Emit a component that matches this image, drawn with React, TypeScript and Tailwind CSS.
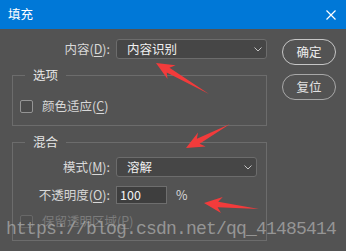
import React from "react";

type P = [number, number];

function arrowPoints(tip: P, tail: P, head = 17, hw = 8, sw = 2.6) {
  const dx = tail[0] - tip[0];
  const dy = tail[1] - tip[1];
  const L = Math.hypot(dx, dy);
  const ux = dx / L, uy = dy / L;
  const px = -uy, py = ux;
  const bx = tip[0] + ux * head, by = tip[1] + uy * head;
  const nx = tip[0] + ux * (head - 4), ny = tip[1] + uy * (head - 4);
  const pts: P[] = [
    tip,
    [bx + px * hw, by + py * hw],
    [nx + px * sw, ny + py * sw],
    tail,
    [nx - px * sw, ny - py * sw],
    [bx - px * hw, by - py * hw],
  ];
  return pts.map((p) => `${p[0].toFixed(1)},${p[1].toFixed(1)}`).join(" ");
}

function Chevron() {
  return (
    <svg width="8" height="5" viewBox="0 0 8 5" className="shrink-0">
      <path d="M0.5 0.5 L4 4 L7.5 0.5" fill="none" stroke="#c4c4c4" strokeWidth="1" />
    </svg>
  );
}

function Label({ text, mn, rest = "):" }: { text: string; mn: string; rest?: string }) {
  return (
    <span className="text-[#d8d8d8]">
      {text}(<span className="underline underline-offset-2">{mn}</span>{rest}
    </span>
  );
}

function Checkbox({ disabled = false }: { disabled?: boolean }) {
  return (
    <div
      className={
        disabled
          ? "w-[13px] h-[13px] rounded-[2px] border border-[#686868] bg-[#4f4f4f]"
          : "w-[13px] h-[13px] rounded-[2px] border border-[#959595] bg-[#4b4b4b]"
      }
    />
  );
}

export default function App() {
  return (
    <div className="relative w-[346px] h-[251px] flex flex-col bg-[#535353] font-['Noto_Sans_CJK_SC',sans-serif] text-[12.5px] overflow-hidden">
      <div className="h-[29px] shrink-0 bg-[#0078d7] flex items-center justify-between pl-[8px] pr-[10px]">
        <span className="text-white leading-none">填充</span>
        <svg width="10" height="10" viewBox="0 0 10 10">
          <path d="M0.5 0.5 L9.5 9.5 M9.5 0.5 L0.5 9.5" stroke="#ffffff" strokeWidth="1.2" />
        </svg>
      </div>
      <div className="flex-1 flex pt-[10px] pl-[12px]">
        <div className="w-[255px] flex flex-col">
          <div className="h-[20px] flex items-center">
            <div className="w-[98px] text-right leading-none">
              <Label text="内容" mn="D" />
            </div>
            <div className="ml-[6px] w-[151px] h-[20px] rounded-[3px] border border-[#6c6c6c] bg-[#464646] flex items-center justify-between pl-[10px] pr-[4px]">
              <span className="text-[#f0f0f0] leading-none">内容识别</span>
              <Chevron />
            </div>
          </div>

          <fieldset className="mt-[8px] h-[59px] border border-[#6c6c6c]">
            <legend className="ml-[12px] px-[8px] h-[16px] leading-[16px] text-[#e6e6e6]">选项</legend>
            <div className="pt-[17px] pl-[7px] flex items-center">
              <Checkbox />
              <span className="ml-[9px] leading-none">
                <Label text="颜色适应" mn="C" rest=")" />
              </span>
            </div>
          </fieldset>

          <fieldset className="mt-[8px] h-[107px] border border-[#6c6c6c]">
            <legend className="ml-[12px] px-[8px] h-[16px] leading-[16px] text-[#e6e6e6]">混合</legend>
            <div className="pt-[7px] flex flex-col">
              <div className="h-[20px] flex items-center">
                <div className="w-[97px] text-right leading-none">
                  <Label text="模式" mn="M" />
                </div>
                <div className="ml-[6px] w-[141px] h-[20px] rounded-[3px] border border-[#6c6c6c] bg-[#464646] flex items-center justify-between pl-[10px] pr-[4px]">
                  <span className="text-[#f0f0f0] leading-none">溶解</span>
                  <Chevron />
                </div>
              </div>
              <div className="mt-[9px] h-[18px] flex items-center">
                <div className="w-[97px] text-right leading-none">
                  <Label text="不透明度" mn="O" />
                </div>
                <div className="ml-[6px] w-[51px] h-[18px] border border-[#6e6e6e] bg-[#3e3e3e] flex items-center pl-[3px]">
                  <span className="text-[#f2f2f2] leading-none">100</span>
                </div>
                <span className="ml-[9px] text-[#d8d8d8] leading-none">%</span>
              </div>
              <div className="mt-[11px] pl-[7px] flex items-center">
                <Checkbox disabled />
                <span className="ml-[9px] leading-none text-[#7c7c7c]">
                  保留透明区域(<span className="underline underline-offset-2">P</span>)
                </span>
              </div>
            </div>
          </fieldset>
        </div>

        <div className="ml-[15px] flex flex-col gap-[9px]">
          <div className="w-[54px] h-[26px] rounded-full border border-[#c6c6c6] flex items-center justify-center text-[#ececec] leading-none">
            确定
          </div>
          <div className="w-[54px] h-[26px] rounded-full border border-[#a8a8a8] flex items-center justify-center text-[#e2e2e2] leading-none">
            复位
          </div>
        </div>
      </div>

      <div className="absolute left-[6px] top-[220px] font-['Liberation_Mono',monospace] text-[18px] leading-[18px] tracking-[-0.8px] text-[#b4b4b4]/70 whitespace-nowrap pointer-events-none">
        https://blog.csdn.net/qq_41485414
      </div>

      <svg className="absolute inset-0 pointer-events-none" width="346" height="251" viewBox="0 0 346 251">
        <polygon points={arrowPoints([156, 63], [209, 94], 18, 8, 2.8)} fill="#f23b3b" />
        <polygon points={arrowPoints([186, 148], [230, 124], 18, 8, 2.8)} fill="#f23b3b" />
        <polygon points={arrowPoints([204, 203], [259, 209], 18, 8, 2.8)} fill="#f23b3b" />
      </svg>
    </div>
  );
}
